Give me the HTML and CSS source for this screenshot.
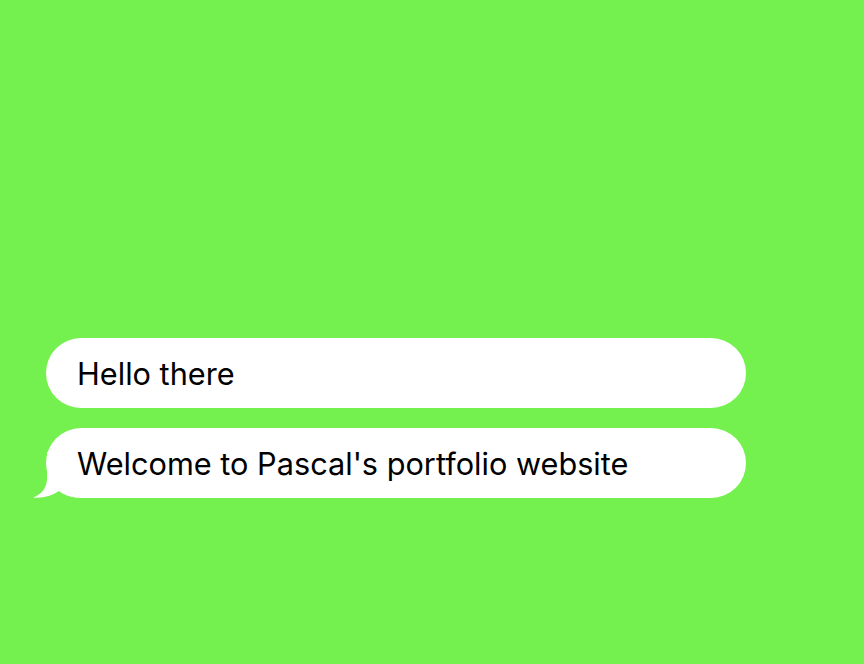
FILE: index.html
```html
<!DOCTYPE html>
<html>
<head>
<meta charset="utf-8">
<link rel="stylesheet" href="styles.css">
</head>
<body>
<main class="chat">
  <div class="bubble"><span class="text">Hello there</span></div>
  <div class="bubble">
    <svg class="tail-svg" width="50" height="50" viewBox="0 0 50 50"><path d="M15 4 L15 32 C14 42 8 47 1 49.5 C12 50.5 21 47 27 43 C32 47 38 49.5 48 49.5 L48 4 Z" fill="#fff"/></svg>
    <span class="text">Welcome to Pascal's portfolio website</span>
  </div>
</main>
</body>
</html>
```
FILE: styles.css
```css
html, body {
  margin: 0;
  height: 100%;
  background: #74f14e;
}
.chat {
  display: flex;
  flex-direction: column;
  gap: 20px;
  padding: 338px 0 0 46px;
}
.bubble {
  position: relative;
  width: 700px;
  height: 70px;
  box-sizing: border-box;
  padding-left: 31px;
  background: #fff;
  border-radius: 35px;
  font-family: Inter, "Liberation Sans", Arial, sans-serif;
  font-size: 30.7px;
  line-height: 72px;
  color: #000;
}
.text {
  position: relative;
}
.tail-svg {
  position: absolute;
  left: -14px;
  top: 20px;
}
```
